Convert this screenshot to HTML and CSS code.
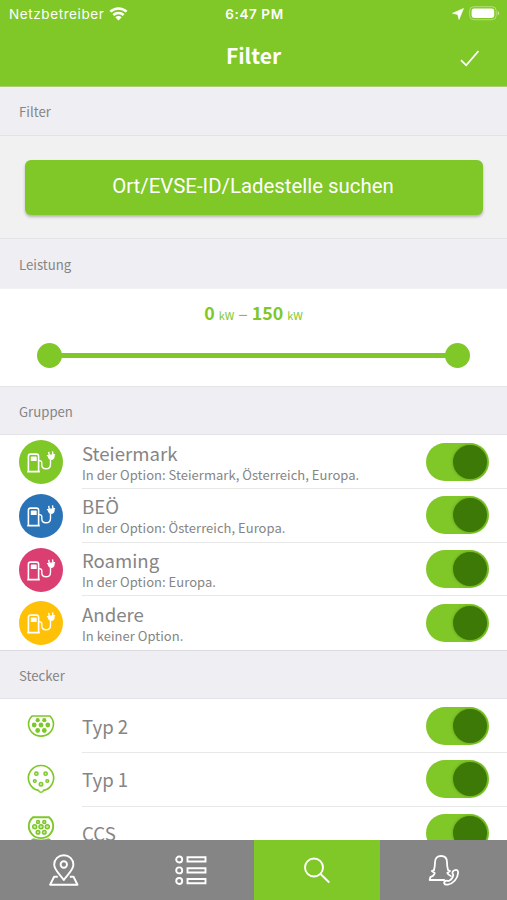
FILE: index.html
```html
<!DOCTYPE html>
<html lang="de">
<head>
<meta charset="utf-8">
<title>Filter</title>
<link rel="stylesheet" href="styles.css">
</head>
<body>
<svg width="0" height="0" class="defs">
  <symbol id="pump" viewBox="0 0 44 44">
    <g fill="none" stroke="#fff" stroke-width="1.6">
      <path d="M9.400 31.500V16.200q0-2.100 2.100-2.100h6q2.100 0 2.100 2.100v15.300M8.200 31.600h12.600"/>
      <path d="M20 20.600c3.400 0 2.800 2.100 2.800 4.200 0 2.700 1 4 4 4s4.700-1.700 4.700-4.600v-4.500" stroke-width="1.400"/>
      <path d="M27.900 15.600l8.200-1M29.700 11.900l.5 3M33.500 11.400l.4 3" stroke-width="1.400"/>
    </g>
    <path d="M11.800 17.300q0-.7.700-.7h4.500q.7 0 .7.700v3.700h-5.900zM28.600 15.500l6.900-.8c.7 2.700-.5 5-3 5.300-2.200.2-3.800-1.700-3.900-4.500z" fill="#fff"/>
  </symbol>
</svg>
<div class="screen">
  <header>
    <div class="status">
      <div class="carrier"><span>Netzbetreiber</span>
        <svg width="19" height="14" viewBox="0 0 19 14"><g fill="none" stroke="#fff" stroke-width="2.500"><path d="M1.400 4.700C6 .3 13 .3 17.600 4.700"/><path d="M4.300 8C7.300 5.200 11.700 5.200 14.700 8"/></g><path d="M6.300 10.200c1.900-1.700 4.500-1.700 6.400 0L9.500 13.500z" fill="#fff"/></svg>
      </div>
      <div class="clock">6:47 PM</div>
      <div class="indicators">
        <svg width="12" height="12" viewBox="0 0 12 12"><path d="M11.500.500L7 11.500 5.800 6.500.500 5.300z" fill="#fff" stroke="#fff" stroke-width=".6"/></svg>
        <svg width="31" height="15" viewBox="0 0 31 15"><rect x=".7" y=".7" width="26.500" height="13" rx="4" fill="none" stroke="#fff" stroke-opacity=".4"/><rect x="2.600" y="2.600" width="22.600" height="9.400" rx="2.400" fill="#fff"/><path d="M28.700 5v4.500q1.500-.8 1.500-2.200T28.700 5" fill="#fff" opacity=".5"/></svg>
      </div>
    </div>
    <div class="navbar">
      <h1>Filter</h1>
      <svg class="check" width="22" height="20" viewBox="0 0 22 20"><path d="M2 11.200l5.200 5.100L19.500 2" fill="none" stroke="#fff" stroke-width="1.800"/></svg>
    </div>
  </header>
  <main>
    <h2>Filter</h2>
    <div class="search"><button>Ort/EVSE-ID/Ladestelle suchen</button></div>
    <h2 class="power">Leistung</h2>
    <section class="range">
      <div class="values"><b>0</b> <small>kW</small> <i>–</i> <b>150</b> <small>kW</small></div>
      <div class="slider"><span class="knob"></span><span class="track"></span><span class="knob"></span></div>
    </section>
    <h2 class="groups">Gruppen</h2>
    <ul>
      <li><svg class="badge green" viewBox="0 0 44 44"><use href="#pump"/></svg><div class="row"><div class="label"><strong>Steiermark</strong><p>In der Option: Steiermark, Österreich, Europa.</p></div><span class="toggle"></span></div></li>
      <li><svg class="badge blue" viewBox="0 0 44 44"><use href="#pump"/></svg><div class="row"><div class="label"><strong>BEÖ</strong><p>In der Option: Österreich, Europa.</p></div><span class="toggle"></span></div></li>
      <li><svg class="badge pink" viewBox="0 0 44 44"><use href="#pump"/></svg><div class="row"><div class="label"><strong>Roaming</strong><p>In der Option: Europa.</p></div><span class="toggle"></span></div></li>
      <li><svg class="badge yellow" viewBox="0 0 44 44"><use href="#pump"/></svg><div class="row"><div class="label"><strong>Andere</strong><p>In keiner Option.</p></div><span class="toggle"></span></div></li>
    </ul>
    <h2 class="plugs">Stecker</h2>
    <ul class="plug-list">
      <li><svg class="plug" viewBox="0 0 44 44"><path d="M13 12h18c2.300 2.300 3.500 4.900 3.500 7.800 0 7-5.600 12.300-12.500 12.300S9.500 26.800 9.500 19.800c0-2.900 1.200-5.500 3.500-7.800z" fill="none" stroke="#7dc829" stroke-width="1.600"/><g fill="#7dc829"><circle cx="18.700" cy="16.200" r="2.100"/><circle cx="25.300" cy="16.200" r="2.100"/><circle cx="15.200" cy="21" r="2.400"/><circle cx="22" cy="21" r="2.400"/><circle cx="28.800" cy="21" r="2.400"/><circle cx="18.700" cy="26.500" r="2.400"/><circle cx="25.300" cy="26.500" r="2.400"/></g></svg><div class="row"><strong>Typ 2</strong><span class="toggle"></span></div></li>
      <li><svg class="plug" viewBox="0 0 44 44"><path d="M19.500 32.400a12.600 12.600 0 1 1 5 0q-.5 1.900-2.500 1.900t-2.500-1.900z" fill="none" stroke="#7dc829" stroke-width="1.600"/><g fill="#c6e8a0" stroke="#7dc829" stroke-width="1.400"><circle cx="17.400" cy="15.700" r="1.700"/><circle cx="26.600" cy="15.700" r="1.700"/><circle cx="15.800" cy="23" r="1.400"/><circle cx="28.300" cy="23" r="1.400"/><circle cx="22" cy="26.200" r="1.800"/></g></svg><div class="row"><strong>Typ 1</strong><span class="toggle"></span></div></li>
      <li><svg class="plug" viewBox="0 0 44 44"><path d="M14 5.300h16c3 2.600 4.200 5.500 4.200 8.800 0 6.600-5.400 12-12.200 12S9.800 20.700 9.800 14.100c0-3.300 1.200-6.200 4.200-8.800z" fill="none" stroke="#7dc829" stroke-width="1.900"/><path d="M11 29.500q.8-2.300 3.500-3.300 7.500 2.800 15 0 2.700 1 3.500 3.300v5H11z" fill="#7dc829"/><g fill="#c6e8a0" stroke="#7dc829" stroke-width="1.500"><circle cx="19" cy="10" r="1.500"/><circle cx="25.300" cy="10" r="1.500"/><circle cx="15.700" cy="14.700" r="2"/><circle cx="22" cy="14.700" r="2"/><circle cx="28.300" cy="14.700" r="2"/><circle cx="19" cy="20.200" r="1.800"/><circle cx="25.300" cy="20.200" r="1.800"/></g></svg><div class="row"><strong>CCS</strong><span class="toggle"></span></div></li>
    </ul>
  </main>
  <nav>
    <a><svg width="34" height="36" viewBox="-.8 0 34 36"><g fill="none" stroke="#fff" stroke-width="1.900" stroke-linejoin="round"><path d="M17 28C14 23 7.400 18.500 7.400 12.500a9.600 9.300 0 0 1 19.200 0c0 6-6.600 10.500-9.600 15.500z"/><circle cx="17" cy="12.500" r="3.200"/><path d="M11 24.800H7.300L3.300 32.700h27.400l-4-7.900H23"/></g></svg></a>
    <a><svg width="34" height="36" viewBox="-1 0 34 36"><g fill="none" stroke="#fff" stroke-width="1.900"><circle cx="5.200" cy="7.500" r="3"/><circle cx="5.200" cy="18.400" r="3"/><circle cx="5.200" cy="29" r="3"/><path d="M13.500 5.200h18v4.300h-18zM13.500 16.200h18v4.300h-18zM13.500 27h18v4.300h-18z"/></g></svg></a>
    <a class="active"><svg width="34" height="36" viewBox="0 0 34 36"><g fill="none" stroke="#fff" stroke-width="1.900"><circle cx="14" cy="15.500" r="9"/><path d="M20.500 22l8.800 8.500"/></g></svg></a>
    <a><svg width="34" height="36" viewBox="0 0 34 36"><g fill="none" stroke="#fff" stroke-width="1.800" stroke-linejoin="round" stroke-linecap="round"><path d="M7 18c1-3.500 1-5.500 1-7.700 0-4 2.300-6.300 6-6.300s6 2.300 6 6.300c0 2.200 0 4.200 1 7.700l2 1-2.700 2c.6 1.600 1.800 2.300 3.600 3"/><path d="M7 18l-2.200 1 2.900 2c-.5 2.200-1.700 3.300-4.400 4.200l-.6 2.800h14.500"/><path d="M27 18.500c2.700-1.500 4.400-.2 4.100 2.500-.4 5.500-4.800 10.700-10.200 11.600-2 .3-3.400-.2-3.700-1.400-.3-1.300.5-2 2-2.500 1.200-.4 2 .6 3 .1 2.200-1.200 3.600-3.200 4-5.400.2-1.200-.7-1.300-.8-2.500 0-1.200.4-1.800 1.600-2.400z"/></g></svg></a>
  </nav>
</div>
</body>
</html>
```

FILE: styles.css
```css
* { box-sizing: border-box; }
body, h1, h2, p, ul { margin: 0; padding: 0; }
body { font-family: "Noto Sans CJK SC", "Noto Sans", sans-serif; color: #858585; background: #fff; }
svg { display: block; flex: none; }
.defs { position: absolute; }
.screen { width: 507px; height: 900px; display: flex; flex-direction: column; overflow: hidden; }
header { height: 87px; flex: none; background: #80c728; border-bottom: 1px solid #a9cb7c; color: #fff; }
.status { height: 27px; display: grid; grid-template-columns: 1fr auto 1fr; align-items: center; padding: 0 7px 0 9px; font-family: Inter, sans-serif; font-size: 13.500px; }
.carrier { display: flex; align-items: center; gap: 5px; letter-spacing: .6px; }
.clock { font-weight: 600; letter-spacing: .6px; }
.indicators { display: flex; justify-content: flex-end; align-items: center; gap: 5px; }
.navbar { height: 57px; display: grid; grid-template-columns: 1fr auto 1fr; align-items: center; padding: 0 26px; }
h1 { grid-column: 2; font-size: 21px; line-height: 57px; font-weight: 700; }
.check { justify-self: end; margin-top: 6px; }
main { flex: 1; min-height: 0; overflow: hidden; }
h2 { height: 49px; padding-left: 19px; background: #efeef3; border-bottom: 1px solid #e3e2e6; font-size: 13.200px; font-weight: 400; line-height: 50px; }
.search { height: 102px; padding: 24px 24px 0 25px; background: #f1f1f1; }
button { display: block; width: 458px; height: 55px; border: 0; border-radius: 6px; background: #80c728; box-shadow: 0 2px 3px rgba(0,0,0,.25); color: #fff; font: 20.400px/51px Roboto, sans-serif; padding: 0 2px 3px 0; }
h2.power { height: 51px; border-top: 1px solid #e3e2e6; border-bottom-color: #f2f1f5; line-height: 52px; }
.range { height: 97px; }
.values { height: 48px; display: flex; justify-content: center; align-items: baseline; gap: 4px; line-height: 46px; color: #80c728; font-size: 17.800px; }
.values small { font-size: 10.900px; }
.values i { font-style: normal; }
.slider { display: flex; align-items: center; width: 433px; margin: 6px 0 0 37px; }
.knob { width: 25px; height: 25px; border-radius: 50%; background: #80c728; }
.track { flex: 1; height: 5px; margin: 0 -1px; background: #80c728; }
h2.groups { height: 49.300px; border-top: 1px solid #e3e2e6; }
ul { list-style: none; }
li { height: 53.700px; display: flex; align-items: center; padding-left: 19px; }
.badge { width: 44px; height: 44px; border-radius: 50%; }
.green { background: #80c728; }
.blue { background: #2b73b7; }
.pink { background: #db3e70; }
.yellow { background: #ffc107; }
.plug { width: 44px; height: 44px; }
.row { flex: 1; height: 100%; margin-left: 19px; padding-right: 18px; display: flex; align-items: center; justify-content: space-between; border-bottom: 1px solid #e8e8e8; }
li:last-child .row { border-color: transparent; }
strong { display: block; font-size: 18.600px; line-height: 25px; font-weight: 400; }
p { font-size: 13px; line-height: 20px; letter-spacing: .03px; }
.label { padding-top: 1px; }
.toggle { width: 63px; height: 38px; border-radius: 19px; background: #80c728; display: flex; align-items: center; justify-content: flex-end; padding-right: 2px; }
.toggle::after { content: ""; width: 34px; height: 34px; border-radius: 50%; background: #3d7907; box-shadow: 0 0 3px rgba(40,90,0,.4); }
h2.plugs { height: 49.300px; border-top: 1px solid #dcdbe0; }
.plug-list strong { padding-bottom: 1px; }
nav { height: 60px; flex: none; display: grid; grid-template-columns: repeat(4, 1fr); background: #858585; }
nav a { display: flex; align-items: center; justify-content: center; }
.active { background: #80c728; }
```
